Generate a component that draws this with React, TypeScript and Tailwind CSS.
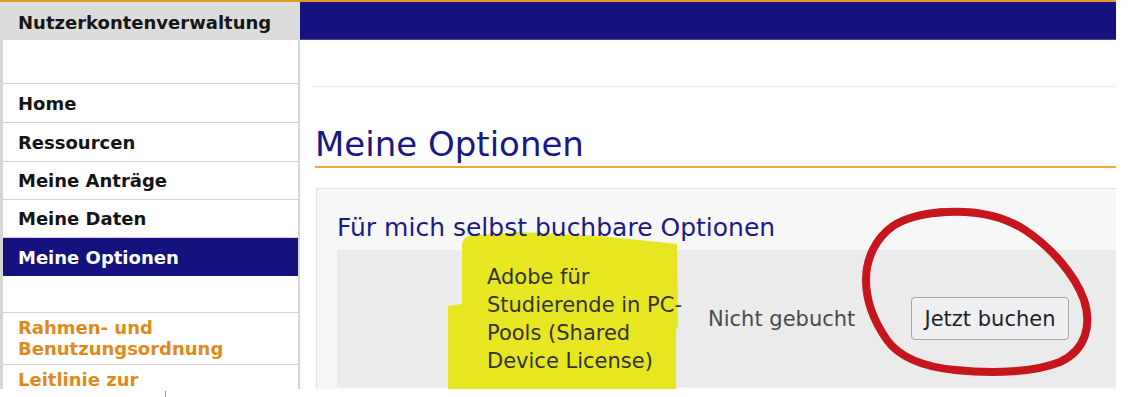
import React from 'react'

const font = { fontFamily: '"DejaVu Sans", Verdana, Tahoma, sans-serif' }

type Item = { label: string[]; h: string; kind?: 'active' | 'orange' | 'empty' }

const menu: Item[] = [
  { label: [], h: 'h-[44px]', kind: 'empty' },
  { label: ['Home'], h: 'h-[39px]' },
  { label: ['Ressourcen'], h: 'h-[39px]' },
  { label: ['Meine Anträge'], h: 'h-[38px]' },
  { label: ['Meine Daten'], h: 'h-[38px]' },
  { label: ['Meine Optionen'], h: 'h-[38px]', kind: 'active' },
  { label: [], h: 'h-[37px]', kind: 'empty' },
  { label: ['Rahmen- und', 'Benutzungsordnung'], h: 'h-[52px]', kind: 'orange' },
  { label: ['Leitlinie zur'], h: 'h-[40px]', kind: 'orange' },
]

function Sidebar() {
  return (
    <aside className="w-[300px] shrink-0 flex flex-col">
      <div className="h-[40px] shrink-0 border-t-2 border-[#e39a2c] bg-[#dcdcdc] pl-[18px] pt-[2px] flex items-center text-[18px] font-bold text-[#161616]">
        Nutzerkontenverwaltung
      </div>
      <nav className="flex-1 border-l-[3px] border-r-2 border-[#d6d6d6]">
        {menu.map((item, i) => {
          const base = `${item.h} shrink-0 pl-[15px] flex flex-col justify-center text-[18px] font-bold leading-[21px]`
          if (item.kind === 'active') {
            return (
              <div key={i} className={`${base} bg-[#15117f] text-white`}>
                {item.label[0]}
              </div>
            )
          }
          return (
            <div
              key={i}
              className={`${base} border-b border-[#d2d2d2] ${
                item.kind === 'orange' ? 'text-[#e08a1c] justify-start pt-[4px]' : 'text-[#141414]'
              }`}
            >
              {item.label.map((l) => (
                <span key={l}>{l}</span>
              ))}
            </div>
          )
        })}
      </nav>
    </aside>
  )
}

function Main() {
  return (
    <main className="flex-1 flex flex-col">
      <div className="h-[40px] shrink-0 border-t-2 border-[#e39a2c] bg-[#15117f] border-b border-b-[#4a47a6]" />
      <div className="pl-[13px] shrink-0">
        <div className="mt-[46px] border-t border-dotted border-[#d8d8d8]" />
        <div className="pl-[2px]">
          <h1 className="mt-[33px] h-[48px] text-[34px] leading-[48px] text-[#1b1784] border-b-2 border-[#f0a838]">
            Meine Optionen
          </h1>
          <section className="mt-[20px] ml-[1px] h-[300px] border-t border-l border-[#e2e2e2] bg-[#f7f7f7] pl-[20px]">
            <h2 className="relative z-10 pt-[24px] text-[25px] leading-[30px] text-[#1c1a86]">
              Für mich selbst buchbare Optionen
            </h2>
            <div className="mt-[7px] h-[137px] bg-[#ebebeb] flex items-center text-[21px] leading-[28px]">
              <div className="w-[150px] shrink-0" />
              <div className="relative z-10 w-[200px] shrink-0 whitespace-nowrap text-[#333]">
                Adobe für
                <br />
                Studierende in PC-
                <br />
                Pools (Shared
                <br />
                Device License)
              </div>
              <div className="w-[224px] shrink-0 pl-[21px] text-[#4a4a4a]">Nicht gebucht</div>
              <button className="h-[43px] w-[158px] rounded-[4px] border border-[#a4a4a8] bg-[#efeff1] text-[21px] text-[#1f1f2a]">
                Jetzt buchen
              </button>
            </div>
          </section>
        </div>
      </div>
    </main>
  )
}

export default function App() {
  return (
    <div className="relative w-[1134px] h-[397px] bg-white overflow-hidden" style={font}>
      <div className="w-[1116px] h-[389px] overflow-hidden flex">
        <Sidebar />
        <Main />
      </div>
      {/* small tick below the sidebar */}
      <div className="absolute left-[165px] top-[391px] w-px h-[6px] bg-[#9a9a9a]" />

      {/* highlighter, painted under the text cells */}
      <svg className="absolute inset-0 pointer-events-none" width="1134" height="397" viewBox="0 0 1134 397">
        <path
          d="M462 244 Q463 236 474 235 L520 232 L600 236 L677 244 L678 326 L676 330 L676 389 L448 389 L448 306 L462 304 Z"
          fill="#e8e521"
        />
      </svg>

      {/* red pen circle */}
      <svg className="absolute inset-0 z-20 pointer-events-none" width="1134" height="397" viewBox="0 0 1134 397">
        <path
          d="M935 213 C970 209 1000 214 1025 230 C1052 248 1075 275 1084 300 C1092 325 1086 350 1060 362 C1035 372 995 374 955 370 C925 367 900 358 887 340 C873 320 866 300 866 280 C866 258 876 238 893 226 C905 218 920 214 942 212"
          fill="none"
          stroke="#c4161c"
          strokeWidth="8"
          strokeLinecap="round"
          strokeLinejoin="round"
        />
      </svg>
    </div>
  )
}
